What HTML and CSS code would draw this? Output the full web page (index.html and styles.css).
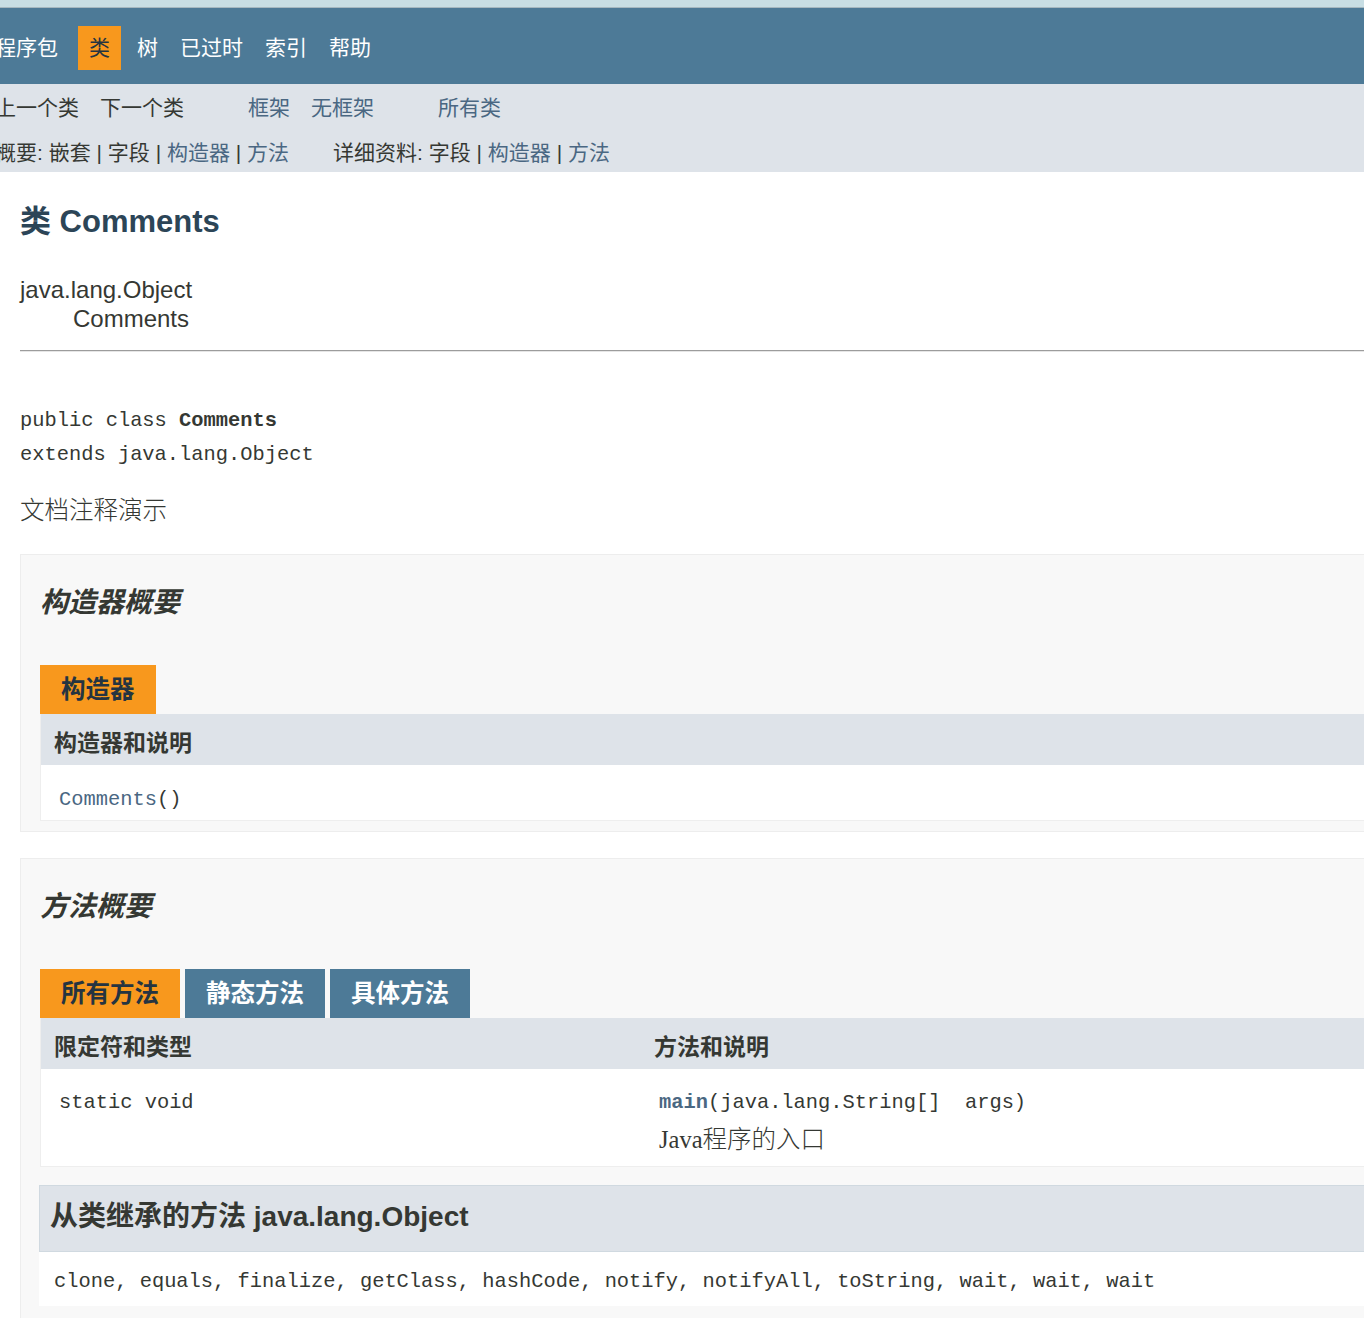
FILE: index.html
```html
<!DOCTYPE html>
<html lang="zh">
<head>
    <meta charset="UTF-8">
    <title>Comments</title>
    <link rel="stylesheet" href="styles.css">
</head>
<body>

    <!-- Top bar -->
    <div class="top-strip"></div>
    <div class="top-nav">
        <ul class="nav-list">
            <li>程序包</li>
            <li class="active">类</li>
            <li>树</li>
            <li>已过时</li>
            <li>索引</li>
            <li>帮助</li>
        </ul>
    </div>

    <!-- Sub nav -->
    <div class="sub-nav">
        <div class="sub-row">
            <ul class="sub-list">
                <li>上一个类</li>
                <li>下一个类</li>
            </ul>
            <ul class="sub-list">
                <li><a href="#">框架</a></li>
                <li><a href="#">无框架</a></li>
            </ul>
            <ul class="sub-list">
                <li><a href="#">所有类</a></li>
            </ul>
        </div>
        <div class="sub-row second">
            <span>概要: 嵌套 | 字段 | <a href="#">构造器</a> | <a href="#">方法</a></span>
            <span>详细资料: 字段 | <a href="#">构造器</a> | <a href="#">方法</a></span>
        </div>
    </div>

    <div class="content">
        <h2 class="title">类 Comments</h2>

        <div class="inheritance">
            <div>java.lang.Object</div>
            <div class="child">Comments</div>
        </div>

        <hr class="rule">

        <pre class="signature">public class <b>Comments</b>
extends java.lang.Object</pre>

        <div class="block">文档注释演示</div>

        <!-- Constructor summary -->
        <div class="summary-box">
            <h3>构造器概要</h3>
            <div class="tabs">
                <span class="tab active">构造器</span>
            </div>
            <div class="summary-table">
                <div class="head-row single">
                    <div class="cell">构造器和说明</div>
                </div>
                <div class="body-row single">
                    <div class="cell code"><a href="#">Comments</a>()</div>
                </div>
            </div>
        </div>

        <!-- Method summary -->
        <div class="summary-box methods">
            <h3>方法概要</h3>
            <div class="tabs">
                <span class="tab active">所有方法</span>
                <span class="tab">静态方法</span>
                <span class="tab">具体方法</span>
            </div>
            <div class="summary-table">
                <div class="head-row">
                    <div class="cell">限定符和类型</div>
                    <div class="cell">方法和说明</div>
                </div>
                <div class="body-row tall">
                    <div class="cell code">static void</div>
                    <div class="cell">
                        <div class="code"><a href="#" class="member">main</a>(java.lang.String[]&nbsp; args)</div>
                        <div class="block-small">Java程序的入口</div>
                    </div>
                </div>
            </div>

            <div class="inherited">
                <h3>从类继承的方法 java.lang.Object</h3>
                <div class="inherited-list">clone, equals, finalize, getClass, hashCode, notify, notifyAll, toString, wait, wait, wait</div>
            </div>
        </div>
    </div>

</body>
</html>
```

FILE: styles.css
```css
* {
    margin: 0;
    padding: 0;
    box-sizing: border-box;
}

body {
    font-family: "Liberation Sans", "Noto Sans CJK SC", sans-serif;
    color: #353833;
    background: #fff;
    overflow: hidden;
}

a {
    color: #4a6782;
    text-decoration: none;
}

ul {
    list-style: none;
}

/* Top bar */
.top-strip {
    height: 8px;
    background: #c8dee4;
    border-bottom: 1px solid #a6b8c0;
}

.top-nav {
    height: 76px;
    padding-top: 18px;
    background: #4d7a97;
}

.nav-list {
    display: flex;
    margin-left: -16px;
}

.nav-list li {
    padding: 0 11px;
    line-height: 44px;
    font-size: 21px;
    color: #fff;
}

.nav-list li.active {
    background: #f8981d;
    color: #253441;
    margin: 0 5px 0 9px;
}

/* Sub nav */
.sub-nav {
    height: 88px;
    padding-top: 8px;
    background: #dee3e9;
    font-size: 21px;
    margin-left: -5px;
}

.sub-row {
    display: flex;
    gap: 64px;
    line-height: 32px;
}

.sub-row.second {
    margin-top: 13px;
    gap: 44px;
}

.sub-list {
    display: flex;
    gap: 21px;
}

/* Content */
.content {
    padding-left: 20px;
}

.title {
    margin-top: 32px;
    font-size: 31px;
    line-height: 36px;
    color: #2c4557;
}

.inheritance {
    margin-top: 35px;
    font-size: 24px;
    line-height: 29px;
}

.inheritance .child {
    padding-left: 53px;
}

.rule {
    border: 0;
    border-top: 1px solid #9c9c9c;
    border-bottom: 1px solid #e6e6e6;
    margin-top: 17px;
}

.signature {
    margin-top: 52px;
    font-family: "Liberation Mono", monospace;
    font-size: 20.4px;
    line-height: 34px;
}

.block {
    margin-top: 22px;
    font-family: "Liberation Serif", "Noto Sans CJK SC", serif;
    font-weight: 300;
    font-size: 24.5px;
    line-height: 34px;
}

/* Summary boxes */
.summary-box {
    margin-top: 26px;
    margin-right: -40px;
    padding: 30px 0 10px 19px;
    background: #f8f8f8;
    border: 1px solid #ededed;
}

.summary-box.methods {
    margin-top: 26px;
}

.summary-box h3 {
    font-size: 28px;
    line-height: 36px;
    font-style: italic;
    font-weight: bold;
}

.tabs {
    display: flex;
    gap: 5px;
    margin-top: 44px;
}

.tab {
    padding: 0 21px;
    line-height: 49px;
    font-size: 24.5px;
    font-weight: bold;
    background: #4d7a97;
    color: #fff;
}

.tab.active {
    background: #f8981d;
    color: #253441;
}

.summary-table {
    background: #fff;
    border: 1px solid #eeeeee;
    border-top: 0;
}

.head-row, .body-row {
    display: grid;
    grid-template-columns: 600px 1fr;
}

.head-row.single, .body-row.single {
    grid-template-columns: 1fr;
}

.head-row {
    background: #dee3e9;
    height: 51px;
}

.head-row .cell {
    padding: 7px 0 0 13px;
    font-size: 23px;
    font-weight: bold;
    line-height: 44px;
}

.body-row .cell {
    padding: 16px 18px 2px;
    line-height: 37px;
}

.body-row.tall .cell {
    padding: 15px 18px 8px;
}

.code {
    font-family: "Liberation Mono", monospace;
    font-size: 20.4px;
}

.member {
    font-weight: bold;
}

.block-small {
    font-family: "Liberation Serif", "Noto Sans CJK SC", serif;
    font-weight: 300;
    font-size: 24.5px;
}

/* Inherited methods */
.inherited {
    margin-top: 18px;
    margin-left: -1px;
    padding-bottom: 10px;
}

.inherited h3 {
    font-style: normal;
    font-size: 28px;
    line-height: 36px;
    padding: 13px 10px 16px;
    background: #dee3e9;
    border: 1px solid #d0d9e0;
}

.inherited-list {
    background: #fff;
    padding: 13px 15px 7px;
    font-family: "Liberation Mono", monospace;
    font-size: 20.4px;
    line-height: 34px;
}
```
